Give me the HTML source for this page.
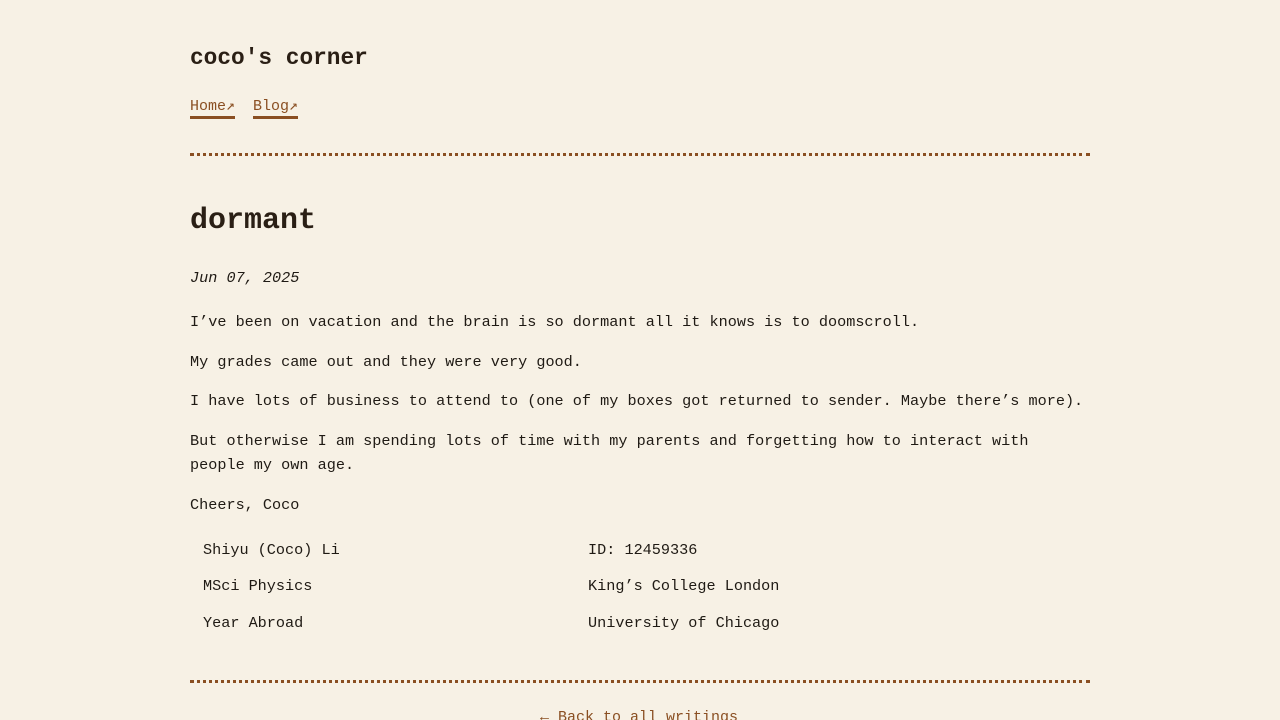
<!DOCTYPE html>
<html style="overflow:hidden"><head><meta charset="utf-8"><style>
html,body{height:720px}
body{margin:0;background:#f7f1e5;font-family:"Liberation Mono","DejaVu Sans Mono",monospace;color:#1f1a14;width:1280px;overflow:hidden;position:relative}
.a{position:absolute;white-space:nowrap}
.t{font-size:15.2px}
.h{font-weight:bold;color:#2a1f15}
.l{color:#8a4f22;font-size:15px}
.u{border-bottom:3px solid #8a4f22;padding-bottom:1px}
.hr{position:absolute;left:190px;width:900px;height:0;border-top:3px dotted #8a4f22}
</style></head><body>
<div class="a h" style="left:190px;top:45px;font-size:22.8px">coco's corner</div>
<div class="a l" style="left:190px;top:96px"><span class="u">Home↗</span></div>
<div class="a l" style="left:253px;top:96px"><span class="u">Blog↗</span></div>
<div class="hr" style="top:153px"></div>
<div class="a h" style="left:190px;top:204px;font-size:30px">dormant</div>
<div class="a t" style="left:190px;top:269px;font-style:italic">Jun 07, 2025</div>
<div class="a t" style="left:190px;top:313px">I’ve been on vacation and the brain is so dormant all it knows is to doomscroll.</div>
<div class="a t" style="left:190px;top:353px">My grades came out and they were very good.</div>
<div class="a t" style="left:190px;top:392px">I have lots of business to attend to (one of my boxes got returned to sender. Maybe there’s more).</div>
<div class="a t" style="left:190px;top:432px">But otherwise I am spending lots of time with my parents and forgetting how to interact with</div>
<div class="a t" style="left:190px;top:456px">people my own age.</div>
<div class="a t" style="left:190px;top:496px">Cheers, Coco</div>
<div class="a t" style="left:203px;top:541px">Shiyu (Coco) Li</div>
<div class="a t" style="left:588px;top:541px">ID: 12459336</div>
<div class="a t" style="left:203px;top:577px">MSci Physics</div>
<div class="a t" style="left:588px;top:577px">King’s College London</div>
<div class="a t" style="left:203px;top:614px">Year Abroad</div>
<div class="a t" style="left:588px;top:614px">University of Chicago</div>
<div class="hr" style="top:680px"></div>
<div class="a l" style="left:540px;top:709px">← Back to all writings</div>
</body></html>
